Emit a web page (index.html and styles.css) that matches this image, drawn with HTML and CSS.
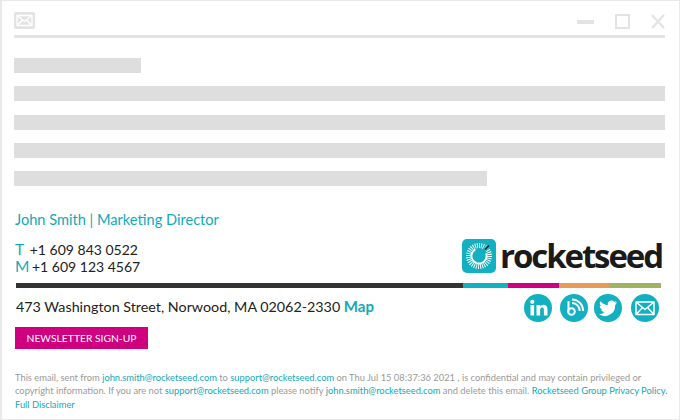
FILE: index.html
```html
<!DOCTYPE html>
<html lang="en">
<head>
<meta charset="utf-8">
<title>Email signature</title>
<link rel="stylesheet" href="styles.css">
</head>
<body>
<main class="frame">
  <header class="titlebar">
    <svg class="mail-icon" width="21" height="17" viewBox="0 0 21 17"><rect width="21" height="17" rx="2" fill="#e3e3e3"/><path d="M3 3.500h15v10H3zM3 3.500l7.500 6 7.500-6M3 13.500l5.500-5.500M18 13.500 12.500 8" fill="none" stroke="#fff" stroke-width="1.300"/></svg>
    <div class="window-controls">
      <svg class="ctl-min" width="17" height="4" viewBox="0 0 17 4"><rect width="17" height="4" fill="#e3e3e3"/></svg>
      <svg class="ctl-max" width="15" height="15" viewBox="0 0 15 15"><rect x="1" y="1" width="13" height="13" fill="none" stroke="#e3e3e3" stroke-width="2"/></svg>
      <svg class="ctl-close" width="14" height="15" viewBox="0 0 14 15"><path d="M1 1l12 13M13 1 1 14" fill="none" stroke="#e3e3e3" stroke-width="2.200"/></svg>
    </div>
  </header>
  <section class="placeholder">
    <div class="bar bar-short"></div>
    <div class="bar"></div>
    <div class="bar"></div>
    <div class="bar"></div>
    <div class="bar bar-long"></div>
  </section>
  <section class="signature">
    <div class="sig-top">
      <div class="contact">
        <div class="name">John Smith | Marketing Director</div>
        <div class="phone first"><span class="key key-t">T</span> +1 609 843 0522</div>
        <div class="phone"><span class="key key-m">M</span> +1 609 123 4567</div>
      </div>
      <div class="logo">
        <svg class="logo-mark" width="34" height="34" viewBox="0 0 34 34">
          <rect width="34" height="34" rx="5" fill="#12b0c1"/>
          <circle cx="17" cy="17" r="10.500" fill="none" stroke="#fff" stroke-width="5" stroke-dasharray="0.900 1.150"/>
          <circle cx="17" cy="17" r="7.500" fill="none" stroke="#fff" stroke-width="1.800" stroke-dasharray="34 13.100" transform="rotate(-20 17 17)"/>
          <path d="M21 12.500 27 6.500" stroke="#12b0c1" stroke-width="3"/>
          <path d="M23 10.500 27 6.500" stroke="#1a1a1a" stroke-width="1.400"/>
        </svg>
        <span class="wordmark">rocketseed</span>
      </div>
    </div>
    <div class="rule">
      <span class="seg seg-dark"></span><span class="seg seg-teal"></span><span class="seg seg-pink"></span><span class="seg seg-orange"></span><span class="seg seg-green"></span>
    </div>
    <div class="sig-bottom">
      <div class="address-col">
        <div class="address">473 Washington Street, Norwood, MA 02062-2330 <a class="map">Map</a></div>
        <a class="cta">NEWSLETTER SIGN-UP</a>
      </div>
      <div class="social">
        <svg class="soc" width="28" height="28" viewBox="0 0 28 28"><circle cx="14" cy="14" r="14" fill="#12b0c1"/><rect x="6.500" y="11" width="3.600" height="10.500" fill="#fff"/><circle cx="8.300" cy="7.800" r="2.100" fill="#fff"/><path d="M12.500 11h3.400v1.600c.8-1.200 2-1.900 3.500-1.900 2.700 0 4.100 1.700 4.100 4.600v6.200h-3.600v-5.600c0-1.500-.6-2.300-1.800-2.300s-2 .9-2 2.400v5.500h-3.600z" fill="#fff"/></svg>
        <svg class="soc" width="28" height="28" viewBox="0 0 28 28"><circle cx="14" cy="14" r="14" fill="#12b0c1"/><path d="M8.500 7v10.500" stroke="#fff" stroke-width="2" fill="none"/><circle cx="11.500" cy="17.500" r="3.300" fill="none" stroke="#fff" stroke-width="2"/><path d="M12 9c4.500.2 7.500 3.500 7.700 8M12 5.500c6.500.2 11 5 11.200 11.500" fill="none" stroke="#fff" stroke-width="2"/></svg>
        <svg class="soc soc-twitter" width="28" height="28" viewBox="0 0 28 28"><circle cx="14" cy="14" r="14" fill="#12b0c1"/><path d="M23 8.300c-.7.3-1.400.5-2.100.6.800-.5 1.300-1.200 1.600-2-.7.400-1.500.7-2.300.9a3.700 3.700 0 0 0-6.300 3.400c-3-.2-5.700-1.600-7.600-3.900-1 1.700-.5 3.800 1.100 4.900-.6 0-1.200-.2-1.700-.5 0 1.800 1.300 3.300 3 3.700-.5.100-1.100.2-1.700.1.500 1.500 1.900 2.500 3.500 2.600A7.500 7.500 0 0 1 5 20.300a10.500 10.500 0 0 0 16.200-9.400c.7-.7 1.300-1.500 1.800-2.600z" fill="#fff"/></svg>
        <svg class="soc soc-mail" width="28" height="28" viewBox="0 0 28 28"><circle cx="14" cy="14" r="14" fill="#12b0c1"/><path d="M5 8h18v12.500H5zM5 8l9 7.500L23 8M5 20.500l6.500-7M23 20.500l-6.500-7" fill="#12b0c1" stroke="#fff" stroke-width="1.500" stroke-linejoin="round"/></svg>
      </div>
    </div>
  </section>
  <footer class="legal">This email, sent from <a>john.smith@rocketseed.com</a> to <a>support@rocketseed.com</a> on Thu Jul 15 08:37:36 2021 , is confidential and may contain privileged or<br>copyright information. If you are not <a>support@rocketseed.com</a> please notify <a>john.smith@rocketseed.com</a> and delete this email. <a>Rocketseed Group Privacy Policy.</a><br><a>Full Disclaimer</a></footer>
</main>
</body>
</html>
```

FILE: styles.css
```css
* { box-sizing: border-box; }
html, body { margin: 0; padding: 0; background: #fff; }
body { width: 680px; height: 420px; overflow: hidden; font-family: Lato, "Liberation Sans", sans-serif; }
a { color: #12a9b9; text-decoration: none; }

.frame {
  width: 680px; height: 420px;
  border: 1px solid #e9e9e9; border-left-width: 2px; border-right-width: 1px;
  padding: 11px 14px 0 12px;
}

.titlebar {
  display: flex; justify-content: space-between; align-items: flex-start;
  height: 26px; border-bottom: 3px solid #e3e3e3;
}
.mail-icon { display: block; }
.window-controls { display: flex; align-items: center; height: 17px; margin-top: 1px; }
.window-controls svg { display: block; }
.ctl-max { margin-left: 21px; }
.ctl-close { margin-left: 21px; }

.placeholder { display: flex; flex-direction: column; gap: 13.250px; padding-top: 20px; }
.bar { height: 15px; background: #dedede; }
.bar-short { width: 127px; }
.bar-long { width: 473px; }

.signature { margin-top: 24px; }
.sig-top { display: flex; justify-content: space-between; align-items: flex-end; }
.contact { color: #222; }
.name { color: #12a9b9; font-size: 14.600px; line-height: 20px; padding-left: 1px; }
.phone { font-size: 14px; line-height: 17px; padding-left: 1px; }
.phone.first { margin-top: 11px; }
.key { color: #12a9b9; font-size: 15.500px; }
.key-t { margin-right: 2px; }
.key-m { margin-right: -1px; }

.logo { display: flex; align-items: center; gap: 4px; margin-bottom: 2px; padding-right: 3px; }
.logo-mark { display: block; }
.wordmark { font-family: "Open Sans", sans-serif; font-weight: 700; font-size: 33px; line-height: 34px; letter-spacing: -2.100px; color: #1a1a1a; }

.rule { display: flex; height: 5px; margin-top: 8px; margin-left: 2px; }
.seg { display: block; height: 100%; }
.seg-dark { width: 447px; background: #333; }
.seg-teal { width: 45px; background: #12b0c1; }
.seg-pink { width: 51px; background: #cf0080; }
.seg-orange { width: 51px; background: #e59a56; }
.seg-green { width: 51px; background: #a2b263; }

.sig-bottom { display: flex; justify-content: space-between; align-items: flex-start; }
.address-col { display: flex; flex-direction: column; align-items: flex-start; }
.address { font-size: 14.300px; line-height: 20px; margin-top: 8px; padding-left: 2px; color: #222; white-space: nowrap; }
.map { font-weight: 700; font-size: 15px; }
.cta {
  display: block; width: 133px; height: 22px; margin-top: 10px; margin-left: 1px;
  background: #cf0080; color: #fff; font-size: 10.300px; line-height: 22px; text-align: center;
}

.social { display: flex; gap: 8px; margin-top: 6px; padding-right: 6px; }
.soc { display: block; }
.soc-twitter { margin-left: -2px; }
.soc-mail { margin-left: 1px; }

.legal { margin-top: 22px; font-size: 9.340px; line-height: 13.400px; color: #9a9a9a; padding-left: 1px; white-space: nowrap; }
```
